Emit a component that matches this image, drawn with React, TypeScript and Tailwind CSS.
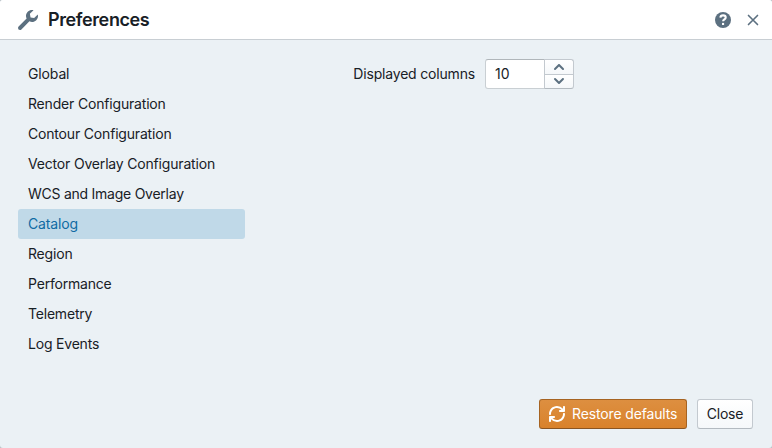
const sections = [
  { name: 'Global', tracking: 'tracking-[-0.14px]' },
  { name: 'Render Configuration', tracking: 'tracking-[-0.18px]' },
  { name: 'Contour Configuration', tracking: 'tracking-[-0.18px]' },
  { name: 'Vector Overlay Configuration', tracking: 'tracking-[-0.18px]' },
  { name: 'WCS and Image Overlay', tracking: 'tracking-[-0.25px]' },
  { name: 'Catalog', tracking: 'tracking-[-0.16px]' },
  { name: 'Region', tracking: 'tracking-[-0.18px]' },
  { name: 'Performance', tracking: 'tracking-[-0.2px]' },
  { name: 'Telemetry', tracking: 'tracking-[-0.2px]' },
  { name: 'Log Events', tracking: 'tracking-[-0.2px]' },
];

function Icon({ d, size = 16, box = 16, className = '' }: { d: string; size?: number; box?: number; className?: string }) {
  return (
    <svg width={size} height={size} viewBox={`0 0 ${box} ${box}`} fill="currentColor" className={`shrink-0 ${className}`} aria-hidden="true">
      <path d={d} fillRule="evenodd" clipRule="evenodd" />
    </svg>
  );
}

const wrench =
  'M19.8 4.44L16.13 8.1l-3.55-.71-.71-3.53L15.54.21c-2.01-.53-4.23-.03-5.8 1.53-1.86 1.85-2.23 4.6-1.14 6.83L.59 16.59C.22 16.95 0 17.45 0 18a2 2 0 002 2c.55 0 1.05-.22 1.41-.59l8.03-8.04c2.23 1.05 4.97.67 6.82-1.16 1.57-1.56 2.07-3.77 1.54-5.77z';
const refresh =
  'M14.99 6.99c-.55 0-1 .45-1 1 0 3.31-2.69 6-6 6-1.77 0-3.36-.78-4.46-2H5c.55 0 1-.45 1-1s-.45-1-1-1H1c-.55 0-1 .45-1 1v4c0 .55.45 1 1 1s1-.45 1-1v-1.74a7.95 7.95 0 006 2.74c4.42 0 8-3.58 8-8 0-.55-.46-1-1.01-1zM15 0c-.55 0-1 .45-1 1v1.74A7.95 7.95 0 008 0C3.58 0 0 3.58 0 8c0 .55.45 1 1 1s1-.45 1-1c0-3.31 2.69-6 6-6 1.77 0 3.36.78 4.46 2H11c-.55 0-1 .45-1 1s.45 1 1 1h4c.55 0 1-.45 1-1V1c0-.55-.45-1-1-1z';
const chevronUp =
  'M12.71 9.29l-4-4C8.53 5.11 8.28 5 8 5s-.53.11-.71.29l-4 4a1.003 1.003 0 001.42 1.42L8 7.41l3.29 3.29c.18.19.43.3.71.3a1.003 1.003 0 00.71-1.71z';
const chevronDown =
  'M12 5c-.28 0-.53.11-.71.29L8 8.59l-3.29-3.3a1.003 1.003 0 00-1.42 1.42l4 4c.18.18.43.29.71.29s.53-.11.71-.29l4-4A1.003 1.003 0 0012 5z';

function HelpIcon() {
  return (
    <svg width="16" height="16" viewBox="0 0 16 16" aria-hidden="true">
      <circle cx="8" cy="8" r="8" fill="currentColor" />
      <path d="M5.4 5.6C5.5 4 6.5 3.4 8.1 3.4c1.6 0 2.6.9 2.6 2.1 0 1.9-2.6 1.9-2.6 3.8" fill="none" stroke="white" strokeWidth="2.1" />
      <rect x="7" y="10.9" width="2.1" height="2.1" fill="white" />
    </svg>
  );
}

function CrossIcon() {
  return (
    <svg width="20" height="20" viewBox="0 0 20 20" fill="none" stroke="currentColor" strokeWidth="1.65" strokeLinecap="round" aria-hidden="true">
      <path d="M5.5 5.5l9 9M14.5 5.5l-9 9" />
    </svg>
  );
}

const buttonFace = 'border border-[#c3c9cf] border-b-[#b3bac0] bg-linear-to-b from-white to-[#f5f8fa]';

export default function App() {
  return (
    <div className="bg-[#b9c0c5]">
      <div className="flex h-[448px] w-[772px] flex-col overflow-hidden rounded-[3px] bg-[#ebf1f5] font-['Inter','Liberation_Sans',sans-serif] text-[14px] leading-[18px] text-[#182026]">
        <header className="flex h-10 shrink-0 items-center border-b border-[#c8ced3] bg-white pr-[9px] pl-[18px] text-[#5c7080]">
          <Icon d={wrench} size={20} box={20} className="mr-2.5" />
          <h1 className="flex-1 text-[18px] leading-[21px] font-semibold tracking-[-0.39px] text-[#182026]">Preferences</h1>
          <button aria-label="Help" className="mr-[12px]"><HelpIcon /></button>
          <button aria-label="Close dialog"><CrossIcon /></button>
        </header>
        <main className="flex flex-1 pt-[19px] pl-[18px]">
          <nav className="flex w-[227px] flex-col">
            {sections.map(({ name, tracking }) => (
              <a
                key={name}
                className={`flex h-[30px] items-center rounded-[3px] px-2.5 ${tracking} ${name === 'Catalog' ? 'bg-[#c0d9e8] text-[#106ba3]' : ''}`}
              >
                {name}
              </a>
            ))}
          </nav>
          <div className="ml-5 flex h-[30px] items-center">
            <label className="w-[210px] text-right tracking-[-0.18px]">Displayed columns</label>
            <div className="ml-2.5 flex h-[30px]">
              <input
                className="h-[30px] w-[60px] rounded-l-[3px] border border-[#c9cfd3] border-t-[#b0b6ba] bg-white px-[9px] pb-px"
                defaultValue="10"
              />
              <div className="-ml-px flex w-[30px] flex-col text-[#5c7080]">
                <button aria-label="Increase" className={`flex h-4 items-center justify-center rounded-tr-[3px] ${buttonFace}`}><Icon d={chevronUp} /></button>
                <button aria-label="Decrease" className={`-mt-px flex h-[15px] items-center justify-center rounded-br-[3px] ${buttonFace}`}><Icon d={chevronDown} className="-mt-[2px]" /></button>
              </div>
            </div>
          </div>
        </main>
        <footer className="flex h-[49px] shrink-0 justify-end gap-2.5 pr-[19px]">
          <button className="flex h-[30px] w-[148px] items-center rounded-[3px] border border-[#a66321] border-b-[#8a5522] bg-linear-to-b from-[#dd8f40] to-[#d9822b] pl-[9px] tracking-[-0.14px] text-white">
            <Icon d={refresh} className="mr-[7px]" />
            Restore defaults
          </button>
          <button className={`h-[30px] w-[56px] rounded-[3px] tracking-[-0.2px] ${buttonFace}`}>Close</button>
        </footer>
      </div>
    </div>
  );
}
